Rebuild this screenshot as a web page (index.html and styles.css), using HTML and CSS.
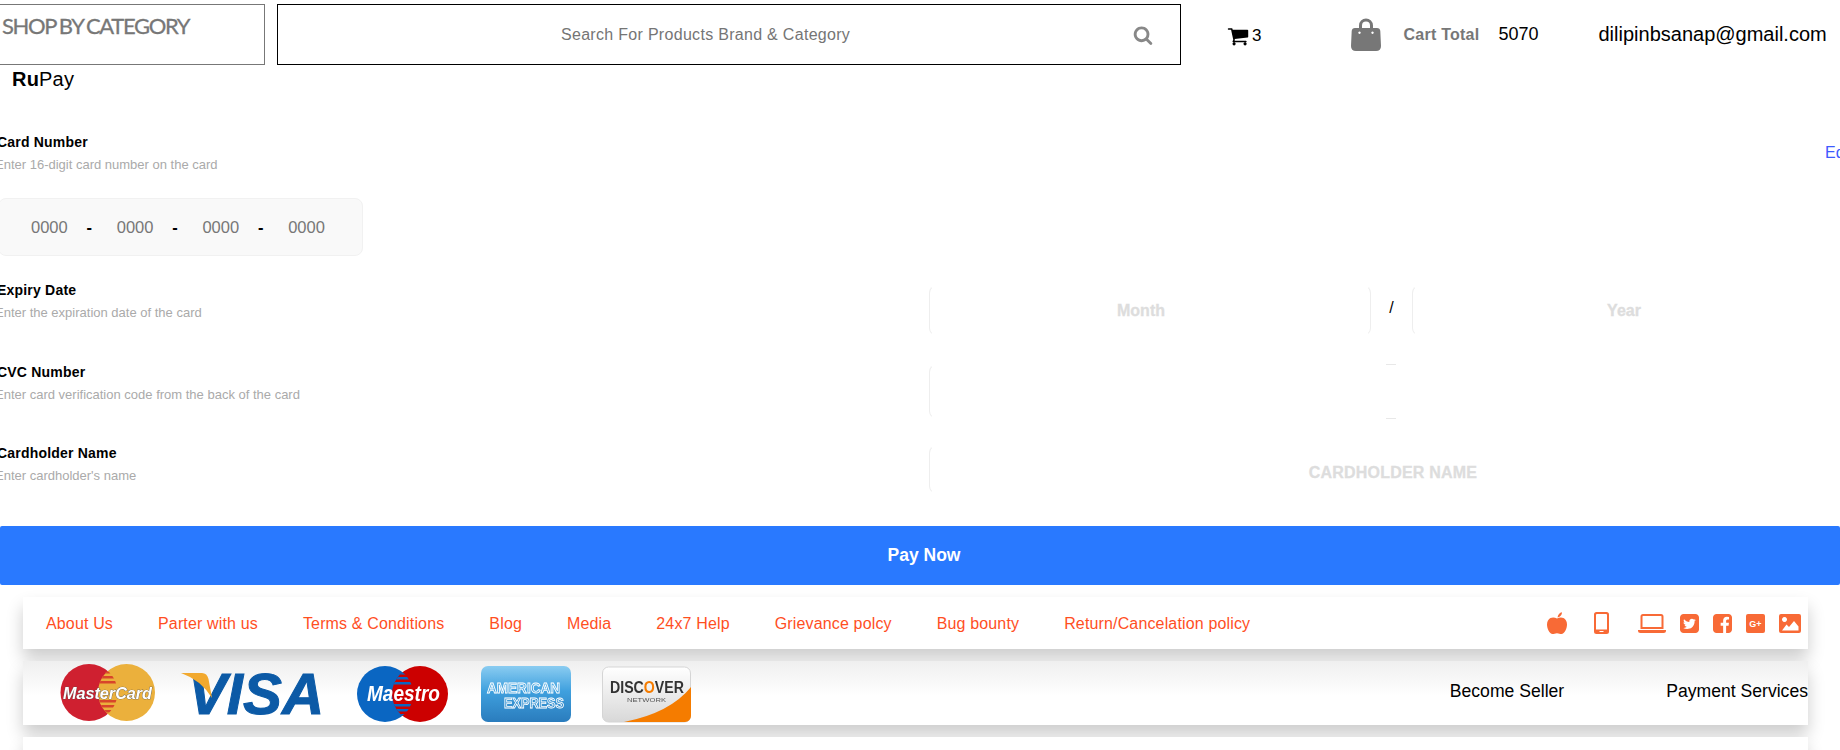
FILE: index.html
```html
<!DOCTYPE html>
<html lang="en">
<head>
<meta charset="utf-8">
<title>Payment</title>
<link rel="stylesheet" href="styles.css">
</head>
<body>
<header class="topbar">
  <div class="category"><span>SHOP BY CATEGORY</span></div>
  <div class="search">
    <span class="search-text">Search For Products Brand &amp; Category</span>
    <svg class="search-icon" viewBox="0 0 1792 1792"><path d="M1216 832q0-185-131.500-316.500t-316.500-131.500-316.500 131.500-131.500 316.500 131.500 316.500 316.500 131.500 316.500-131.500 131.500-316.500zm512 832q0 52-38 90t-90 38q-54 0-90-38l-343-342q-179 124-399 124-143 0-273.500-55.500t-225-150-150-225-55.500-273.500 55.500-273.500 150-225 225-150 273.500-55.500 273.500 55.500 225 150 150 225 55.500 273.500q0 220-124 399l343 343q37 37 37 90z"/></svg>
  </div>
  <svg class="cart-icon" viewBox="0 0 1792 1792"><path d="M704 1536q0 52-38 90t-90 38-90-38-38-90 38-90 90-38 90 38 38 90zm896 0q0 52-38 90t-90 38-90-38-38-90 38-90 90-38 90 38 38 90zm128-1088v512q0 24-16.500 42.500t-40.500 21.500l-1044 122q13 60 13 70 0 16-24 64h920q26 0 45 19t19 45-19 45-45 19h-1024q-26 0-45-19t-19-45q0-11 8-31.500t16-36 21.500-40 15.500-29.500l-177-823h-204q-26 0-45-19t-19-45 19-45 45-19h256q16 0 28.500 6.500t19.500 15.500 13 24.500 8 26 5.500 29.500 4.500 26h1201q26 0 45 19t19 45z"/></svg>
  <span class="cart-count">3</span>
  <svg class="bag-icon" viewBox="0 0 30 33"><path d="M8 11V7.500a7 7 0 0 1 14 0V11h-3V7.500a4 4 0 0 0-8 0V11z"/><path d="M4 10h22q3 0 3.300 3l.700 15q0 5-5 5H5q-5 0-5-5l.700-15Q1 10 4 10zm4.500 3.500a1.200 1.200 0 1 0 .01 0zm13 0a1.200 1.200 0 1 0 .01 0z" fill-rule="evenodd"/></svg>
  <span class="cart-label">Cart Total</span>
  <span class="cart-value">5070</span>
  <span class="email">dilipinbsanap@gmail.com</span>
</header>

<main class="payment">
  <div class="brand"><b>Ru</b>Pay</div>

  <section class="row row-card">
    <div class="info">
      <div class="label">Card Number</div>
      <div class="hint">Enter 16-digit card number on the card</div>
      <div class="card-input">
        <span class="num">0000</span><span class="dash">-</span>
        <span class="num">0000</span><span class="dash">-</span>
        <span class="num">0000</span><span class="dash">-</span>
        <span class="num">0000</span>
      </div>
    </div>
    <a class="edit">Edit</a>
  </section>

  <section class="row row-expiry">
    <div class="info">
      <div class="label">Expiry Date</div>
      <div class="hint">Enter the expiration date of the card</div>
    </div>
    <div class="field field-date">Month</div>
    <span class="slash">/</span>
    <div class="field field-date">Year</div>
  </section>

  <section class="row row-cvc">
    <div class="info">
      <div class="label">CVC Number</div>
      <div class="hint">Enter card verification code from the back of the card</div>
    </div>
    <div class="field field-cvc"></div>
    <div class="cvc-tail"></div>
  </section>

  <section class="row row-name">
    <div class="info">
      <div class="label">Cardholder Name</div>
      <div class="hint">Enter cardholder's name</div>
    </div>
    <div class="field field-name">CARDHOLDER NAME</div>
  </section>

  <button class="pay">Pay Now</button>
</main>

<footer class="footer">
  <nav class="bar links">
    <a>About Us</a><a>Parter with us</a><a>Terms &amp; Conditions</a><a>Blog</a><a>Media</a><a>24x7 Help</a><a>Grievance polcy</a><a>Bug bounty</a><a>Return/Cancelation policy</a>
    <div class="socials">
      <svg class="ic-apple" viewBox="0 0 20 22"><path d="M10.500 5.500C11 2.500 12.500.8 15 .3c0 2.700-1.500 4.500-4.500 5.200z"/><path d="M10 6.500c2-1.200 4.500-1.500 6.500-.5 2 1 3.500 3.300 3.500 6.500 0 4-2.500 9.500-5.500 9.500-1.500 0-2.500-.8-4.500-.8s-3 .8-4.500.8C2.500 22 0 16.500 0 12.500 0 9.300 1.500 7 3.500 6c2-1 4.500-.7 6.500.5z"/></svg>
      <svg class="ic-phone" viewBox="0 0 15 22"><path fill-rule="evenodd" d="M2.500 0h10A2.500 2.500 0 0 1 15 2.500v17a2.500 2.500 0 0 1-2.500 2.500h-10A2.500 2.500 0 0 1 0 19.500v-17A2.500 2.500 0 0 1 2.500 0zM2 3v14.500h11V3a1 1 0 0 0-1-1H3a1 1 0 0 0-1 1zm3.500 16v1h4v-1z"/></svg>
      <svg class="ic-laptop" viewBox="0 0 28 19"><path fill-rule="evenodd" d="M5 0h18a2.500 2.500 0 0 1 2.500 2.500V15h-23V2.500A2.500 2.500 0 0 1 5 0zm-.500 2.500V13h19V2.500a.5.5 0 0 0-.5-.5H5a.5.5 0 0 0-.5.500z"/><path d="M0 16h28v.5a2.500 2.500 0 0 1-2.500 2.500h-23A2.500 2.500 0 0 1 0 16.500z"/></svg>
      <svg class="ic-square" viewBox="128 128 1536 1536"><path d="M1408 610q-56 25-121 34 68-40 93-117-65 38-134 51-61-66-153-66-87 0-148.500 61.500t-61.500 148.500q0 29 5 48-129-7-242-65t-192-155q-29 50-29 106 0 114 91 175-47-1-100-26v2q0 75 50 133.500t123 72.500q-29 8-51 8-13 0-39-4 21 63 74.500 104t121.500 42q-116 90-261 90-26 0-50-3 148 94 322 94 112 0 210-35.500t168-95 120.500-137 75-162 24.500-168.500q0-18-1-27 63-45 105-109zm256-194v960q0 119-84.500 203.500t-203.500 84.500h-960q-119 0-203.500-84.500t-84.500-203.500v-960q0-119 84.500-203.500t203.500-84.500h960q119 0 203.500 84.500t84.500 203.500z"/></svg>
      <svg class="ic-square" viewBox="128 128 1536 1536"><path d="M1376 128q119 0 203.500 84.500t84.500 203.500v960q0 119-84.500 203.500t-203.500 84.500h-188v-595h199l30-232h-229v-148q0-56 23.500-84t91.500-28l122-1v-207q-63-9-178-9-136 0-217.500 80t-81.500 226v171h-200v232h200v595h-532q-119 0-203.500-84.500t-84.500-203.500v-960q0-119 84.500-203.500t203.500-84.500h960z"/></svg>
      <svg class="ic-square" viewBox="0 0 19 19"><rect width="19" height="19" rx="2"/><text class="gplus" x="9.500" y="12.800" text-anchor="middle">G+</text></svg>
      <svg class="ic-image" viewBox="0 0 22 19"><path fill-rule="evenodd" d="M2 0h18a2 2 0 0 1 2 2v15a2 2 0 0 1-2 2H2a2 2 0 0 1-2-2V2a2 2 0 0 1 2-2zm3.500 3a2.500 2.500 0 1 0 .01 0zM3 16.500h16.500v-4l-4.500-5.500-5 6-2.500-2.500z"/></svg>
    </div>
  </nav>

  <div class="bar payments">
    <div class="logos">
      <svg class="logo logo-mc" viewBox="0 0 121 64">
        <defs>
          <clipPath id="mcRed"><circle cx="29" cy="31.500" r="28.500"/></clipPath>
          <clipPath id="mcYellow"><circle cx="66.500" cy="31.500" r="28.500"/></clipPath>
        </defs>
        <circle cx="29" cy="31.500" r="28.500" fill="#cf2030"/>
        <circle cx="66.500" cy="31.500" r="28.500" fill="#ebb03c"/>
        <g clip-path="url(#mcRed)"><g clip-path="url(#mcYellow)" fill="#d8452a">
          <rect x="30" y="10" width="36" height="2.500"/><rect x="30" y="15" width="36" height="2.500"/><rect x="30" y="20" width="36" height="2.500"/><rect x="30" y="39" width="36" height="2.500"/><rect x="30" y="44" width="36" height="2.500"/><rect x="30" y="49" width="36" height="2.500"/>
        </g></g>
        <text class="mc-text" x="3" y="38" textLength="89" lengthAdjust="spacingAndGlyphs">MasterCard</text>
      </svg>
      <svg class="logo logo-visa" viewBox="0 0 176 64">
        <text class="visa-text" x="7" y="53" textLength="136" lengthAdjust="spacingAndGlyphs">VISA</text>
        <path d="M0 12h21q5 0 6.500 6l3.500 19Q20 19 0 12z" fill="#f2a92e"/>
      </svg>
      <svg class="logo logo-maestro" viewBox="0 0 124 64">
        <defs>
          <clipPath id="maBlue"><circle cx="28" cy="33" r="28"/></clipPath>
          <clipPath id="maRed"><circle cx="63" cy="33" r="28"/></clipPath>
        </defs>
        <circle cx="28" cy="33" r="28" fill="#0a66c2"/>
        <circle cx="63" cy="33" r="28" fill="#cc0000"/>
        <g clip-path="url(#maBlue)"><g clip-path="url(#maRed)" fill="#0a66c2">
          <rect x="30" y="11" width="32" height="2.500"/><rect x="30" y="16" width="32" height="2.500"/><rect x="30" y="21" width="32" height="2.500"/><rect x="30" y="43" width="32" height="2.500"/><rect x="30" y="48" width="32" height="2.500"/><rect x="30" y="53" width="32" height="2.500"/>
        </g></g>
        <text class="maestro-text" x="10" y="40" textLength="73" lengthAdjust="spacingAndGlyphs">Maestro</text>
      </svg>
      <svg class="logo logo-amex" viewBox="0 0 121 64">
        <defs><linearGradient id="amexFill" x1="0" y1="0" x2="0" y2="1"><stop offset="0" stop-color="#8accf1"/><stop offset=".45" stop-color="#3fa0de"/><stop offset="1" stop-color="#2a7cbd"/></linearGradient></defs>
        <rect y="5" width="90" height="56" rx="7" fill="url(#amexFill)"/>
        <text class="amex-text" x="6" y="32" textLength="73" lengthAdjust="spacingAndGlyphs">AMERICAN</text>
        <text class="amex-text" x="23" y="47" textLength="60" lengthAdjust="spacingAndGlyphs">EXPRESS</text>
      </svg>
      <svg class="logo logo-discover" viewBox="0 0 90 64">
        <defs><linearGradient id="discFill" x1="0" y1="0" x2="0" y2="1"><stop offset="0" stop-color="#fff"/><stop offset="1" stop-color="#d8d8d8"/></linearGradient></defs>
        <rect x=".5" y="6" width="88" height="55" rx="6" fill="url(#discFill)" stroke="#d5d5d5"/>
        <path d="M22 61Q68 52 89 26V55a6 6 0 0 1-6 6z" fill="#f57c00"/>
        <text class="disc-text" x="8" y="32" textLength="74" lengthAdjust="spacingAndGlyphs">DISC<tspan class="disc-o">O</tspan>VER</text>
        <text class="disc-sub" x="25" y="41" textLength="39" lengthAdjust="spacingAndGlyphs">NETWORK</text>
      </svg>
    </div>
    <a class="pay-link seller">Become Seller</a>
    <a class="pay-link">Payment Services</a>
  </div>

  <div class="bar tail"></div>
</footer>
</body>
</html>
```

FILE: styles.css
```css
* { box-sizing: border-box; }

html, body {
  margin: 0;
  width: 1840px;
  height: 750px;
  overflow: hidden;
  background: #fff;
  font-family: "Liberation Sans", Arial, sans-serif;
  color: #000;
}

/* header */
.topbar {
  display: flex;
  align-items: center;
  height: 65px;
  padding-top: 4px;
}

.category {
  flex: none;
  width: 266px;
  height: 61px;
  margin-left: -1px;
  padding: 8px 0 0 2px;
  border: 1px solid #777;
  color: #777;
  font-family: Lato, "Liberation Sans", sans-serif;
  font-size: 22px;
  line-height: 26px;
  letter-spacing: -1.35px;
  word-spacing: -1px;
  -webkit-text-stroke: .3px #777;
  white-space: nowrap;
}

.search {
  flex: none;
  display: flex;
  align-items: center;
  width: 904px;
  height: 61px;
  margin-left: 12px;
  padding: 0 27px 0 283px;
  border: 1px solid #000;
}

.search-text {
  flex: 1;
  color: #757575;
  font-size: 16px;
  letter-spacing: .3px;
}

.search-icon { width: 20px; height: 20px; fill: #888; }

.cart-icon { flex: none; width: 22px; height: 22px; margin: 2px 0 0 46px; }

.cart-count { margin: 2px 0 0 3px; font-size: 17px; }

.bag-icon { flex: none; width: 30px; height: 33px; margin-left: 90px; fill: #777; }

.cart-label {
  margin: 0 0 0 22px;
  color: #777;
  font-size: 16px;
  font-weight: bold;
  letter-spacing: .25px;
}

.cart-value { margin: 0 0 0 19px; font-size: 18px; }

.email { margin: 0 0 0 60px; font-size: 20px; white-space: nowrap; }

/* form */
.payment { display: flex; flex-direction: column; }

.brand {
  height: 24px;
  margin: 2px 0 0 12px;
  font-size: 20px;
  line-height: 24px;
  letter-spacing: .2px;
}

.row { display: flex; align-items: flex-start; flex: none; width: 1900px; }

.info { flex: none; width: 931px; margin-left: -2px; }

.label { margin-left: -1px; font-size: 14px; font-weight: bold; line-height: 20px; letter-spacing: .2px; }

.hint { margin: 3px 0 0 -3px; color: #aaa; font-size: 13px; line-height: 20px; }

.row-card { margin-top: 41px; }

.card-input {
  display: flex;
  align-items: center;
  gap: 21.750px;
  width: 365px;
  height: 58px;
  margin-top: 23px;
  padding-left: 32px;
  background: #f9f9f9;
  border: 1px solid #f1f1f1;
  border-radius: 8px;
  font-size: 16.500px;
}

.num { color: #777; }

.dash { margin: 0 3px 0 -3px; font-weight: bold; }

.edit { margin: 11px 0 0 896px; color: #3d5afe; font-size: 16px; line-height: 20px; }

.field {
  flex: none;
  display: flex;
  align-items: center;
  justify-content: center;
  border: 1px solid transparent;
  border-left-color: #eee;
  border-radius: 8px;
  color: #ddd;
  font-size: 16px;
  font-weight: bold;
  -webkit-text-stroke: .3px #ddd;
}

.row-expiry { margin-top: 24px; }

.field-date {
  width: 442px;
  height: 51px;
  margin-top: 5px;
  padding-right: 18px;
  border-right-color: #eee;
}

.slash {
  flex: none;
  width: 41px;
  margin-top: 18px;
  font-size: 16px;
  line-height: 20px;
  text-align: center;
}

.row-cvc { margin-top: 26px; }

.field-cvc { width: 457px; height: 55px; margin-top: 2px; }

.cvc-tail {
  flex: none;
  width: 10px;
  height: 55px;
  margin-top: 2px;
  border-top: 1px solid #e8e8e8;
  border-bottom: 1px solid #e8e8e8;
}

.row-name { margin-top: 24px; }

.field-name {
  width: 928px;
  height: 49px;
  margin-top: 2px;
  padding-top: 7px;
  letter-spacing: .2px;
}

.pay {
  flex: none;
  width: 1840px;
  height: 59px;
  margin-top: 32px;
  padding: 0 0 0 8px;
  background: #2979ff;
  border: 0;
  border-radius: 2px;
  color: #fff;
  font-family: inherit;
  font-size: 17.500px;
  font-weight: bold;
}

/* footer */
.footer {
  display: flex;
  flex-direction: column;
  gap: 12px;
  width: 1785px;
  margin: 12px 0 0 23px;
}

.bar {
  flex: none;
  display: flex;
  align-items: center;
  background: #fff;
  box-shadow: 0 10px 16px rgba(0, 0, 0, .2);
}

.links { height: 52px; padding: 2px 0 0 23px; gap: 45px; }

.links a { color: #ff4f1f; font-size: 16px; letter-spacing: .15px; white-space: nowrap; }

.socials {
  display: flex;
  align-items: center;
  margin: -2px 0 0 auto;
  padding-right: 7px;
  fill: #f86a36;
}

.ic-apple { width: 20px; height: 22px; }
.ic-phone { width: 15px; height: 22px; margin-left: 27px; }
.ic-laptop { width: 28px; height: 19px; margin-left: 29px; }
.ic-square { width: 19px; height: 19px; margin-left: 14px; }
.ic-image { width: 22px; height: 19px; margin-left: 14px; }

.gplus { fill: #fff; font-size: 9px; font-weight: bold; }

.payments {
  height: 64px;
  background: linear-gradient(#efefef, #fff 55%);
}

.logos { display: flex; flex: 1; padding-left: 37px; }

.logo { flex: none; height: 64px; filter: blur(.35px); }
.logo-mc { width: 121px; }
.logo-visa { width: 176px; }
.logo-maestro { width: 124px; }
.logo-amex { width: 121px; }
.logo-discover { width: 90px; }

.mc-text {
  fill: #fff;
  stroke: #555;
  stroke-width: .7px;
  paint-order: stroke;
  font-size: 16px;
  font-style: italic;
  font-weight: bold;
}

.visa-text {
  fill: #0c5aa6;
  stroke: #0c5aa6;
  stroke-width: 1px;
  font-size: 57px;
  font-style: italic;
  font-weight: bold;
}

.maestro-text { fill: #fff; font-size: 22px; font-style: italic; font-weight: bold; }

.amex-text {
  fill: none;
  stroke: #fff;
  stroke-width: .9px;
  font-size: 15px;
  font-weight: bold;
}

.disc-text { fill: #333; font-size: 16px; font-weight: bold; }
.disc-o { fill: #f57c00; }
.disc-sub { fill: #555; font-size: 6px; }

.pay-link { margin-bottom: 3px; font-size: 17.600px; white-space: nowrap; }

.seller { margin-right: 102px; }

.tail { height: 20px; }
```
